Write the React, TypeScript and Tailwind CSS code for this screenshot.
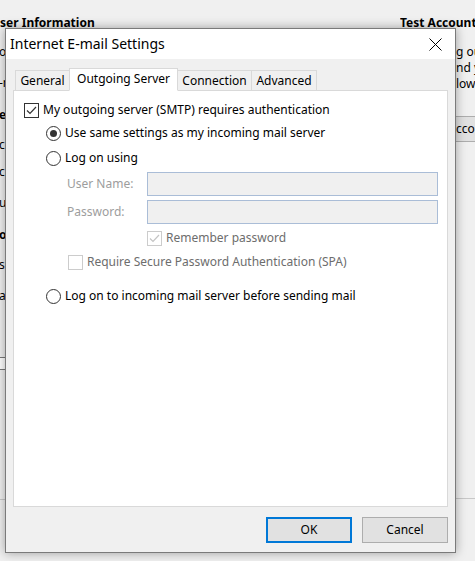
import React from 'react';

type BoxProps = { checked?: boolean; disabled?: boolean };

// Windows 10 style checkbox
const CheckBox: React.FC<BoxProps> = ({ checked, disabled }) => (
    <div
        className={`flex h-[15px] w-[15px] shrink-0 items-center justify-center border bg-white ${
            disabled ? 'border-[#cccccc]' : 'border-[#333333]'
        }`}
    >
        {checked && (
            <svg width="13" height="13" viewBox="0 0 13 13">
                <path
                    d="M2 6.5 L5 9.5 L11 3"
                    fill="none"
                    stroke={disabled ? '#c4c4c4' : '#333333'}
                    strokeWidth="1.2"
                />
            </svg>
        )}
    </div>
);

const Radio: React.FC<{ checked?: boolean }> = ({ checked }) => (
    <div className="flex h-[15px] w-[15px] shrink-0 items-center justify-center rounded-full border border-[#333333] bg-white">
        {checked && <div className="h-[7px] w-[7px] rounded-full bg-[#333333]" />}
    </div>
);

const Tab: React.FC<{ label: string; width: string; active?: boolean; first?: boolean }> = ({
    label,
    width,
    active,
    first,
}) => (
    <div
        className={`flex items-center justify-center border border-[#d9d9d9] ${width} ${first ? '' : 'ml-[-1px]'} ${
            active ? 'relative z-10 h-[23px] border-b-white bg-white pb-[2px]' : 'h-[21px] bg-[#f0f0f0]'
        }`}
    >
        {label}
    </div>
);

const Button: React.FC<{ label: string; primary?: boolean }> = ({ label, primary }) => (
    <div
        className={`flex h-[26px] w-[86px] items-center justify-center bg-[#e1e1e1] ${
            primary ? 'border-2 border-[#0078d7]' : 'border border-[#adadad]'
        }`}
    >
        {label}
    </div>
);

export default function App() {
    return (
        <div className="relative h-[561px] w-[475px] overflow-hidden bg-[#f0f0f0] font-['Noto_Sans',sans-serif] text-[12px] leading-[16px] text-black">
            {/* Ventana de fondo (Account Settings), casi todo tapado por el dialogo */}
            <div className="flex h-full">
                <div className="w-[400px] shrink-0 overflow-hidden whitespace-nowrap">
                    <div className="ml-[-9px] mt-[15px] h-[16px] font-bold">User Information</div>
                    <div className="ml-[-1px] mt-[13px] h-[16px]">o</div>
                    <div className="ml-[-1px] mt-[15px] h-[16px]">-m</div>
                    <div className="ml-[-1px] mt-[16px] h-[16px] font-bold">e</div>
                    <div className="ml-[-1px] mt-[14px] h-[16px]">c</div>
                    <div className="ml-[-1px] mt-[11px] h-[16px]">c</div>
                    <div className="ml-[-1px] mt-[15px] h-[16px]">u</div>
                    <div className="ml-[-1px] mt-[16px] h-[16px] font-bold">o</div>
                    <div className="ml-[-1px] mt-[14px] h-[16px]">s</div>
                    <div className="ml-[-1px] mt-[15px] h-[16px]">a:</div>
                    <div className="ml-[-10px] mt-[53px] h-[13px] w-[60px] border border-[#7a7a7a] bg-white" />
                    <div className="mt-[129px] border-t border-[#c8c8c8]" />
                </div>
                <div className="flex-1 overflow-hidden whitespace-nowrap">
                    <div className="mt-[15px] h-[16px] font-bold">Test Account</div>
                    <div className="ml-[56px] mt-[13px] h-[16px]">g ou</div>
                    <div className="ml-[56px] h-[16px]">nd y</div>
                    <div className="ml-[56px] h-[16px]">low</div>
                    <div className="ml-[12px] mt-[24px] flex h-[26px] w-[160px] items-center border border-[#adadad] bg-[#e1e1e1] pl-[43px]">
                        ccoun
                    </div>
                    <div className="mt-[356px] border-t border-[#c8c8c8]" />
                </div>
            </div>

            {/* Dialogo Internet E-mail Settings */}
            <div className="absolute left-[5px] top-[28px] flex h-[525px] w-[451px] flex-col border border-[#7a7a7a] bg-[#f0f0f0] shadow-[0_0_10px_rgba(0,0,0,0.35)]">
                <div className="flex h-[30px] shrink-0 items-center justify-between bg-white pl-[4px] pr-[13px]">
                    <span className="text-[14px] leading-[20px]">Internet E-mail Settings</span>
                    <svg width="13" height="13" viewBox="0 0 13 13">
                        <path d="M0.5 0.5 L12.5 12.5 M12.5 0.5 L0.5 12.5" stroke="#000000" strokeWidth="1" />
                    </svg>
                </div>

                <div className="flex flex-1 flex-col px-[7px] pt-[9px]">
                    <div className="relative z-10 mb-[-1px] flex h-[23px] items-end pl-[2px]">
                        <Tab label="General" width="w-[55px]" first />
                        <Tab label="Outgoing Server" width="w-[109px]" active />
                        <Tab label="Connection" width="w-[75px]" />
                        <Tab label="Advanced" width="w-[66px]" />
                    </div>

                    <div className="flex h-[417px] flex-col border border-[#d9d9d9] bg-white pt-[11px]">
                        <div className="flex h-[16px] items-center gap-[4px] pl-[10px]">
                            <CheckBox checked />
                            <span>My outgoing server (SMTP) requires authentication</span>
                        </div>
                        <div className="mt-[7px] flex h-[16px] items-center gap-[4px] pl-[32px]">
                            <Radio checked />
                            <span>Use same settings as my incoming mail server</span>
                        </div>
                        <div className="mt-[9px] flex h-[16px] items-center gap-[4px] pl-[32px]">
                            <Radio />
                            <span>Log on using</span>
                        </div>
                        <div className="mt-[6px] flex h-[24px] items-center pl-[53px]">
                            <span className="w-[80px] text-[#9d9d9d]">User Name:</span>
                            <div className="h-[24px] w-[291px] border border-[#aabdd7] bg-[#f0f0f0]" />
                        </div>
                        <div className="mt-[4px] flex h-[24px] items-center pl-[53px]">
                            <span className="w-[80px] text-[#9d9d9d]">Password:</span>
                            <div className="h-[24px] w-[291px] border border-[#aabdd7] bg-[#f0f0f0]" />
                        </div>
                        <div className="mt-[6px] flex h-[16px] items-center gap-[4px] pl-[133px]">
                            <CheckBox checked disabled />
                            <span className="text-[#6d6d6d]">Remember password</span>
                        </div>
                        <div className="mt-[8px] flex h-[16px] items-center gap-[4px] pl-[54px]">
                            <CheckBox disabled />
                            <span className="text-[#6d6d6d]">Require Secure Password Authentication (SPA)</span>
                        </div>
                        <div className="mt-[18px] flex h-[16px] items-center gap-[4px] pl-[32px]">
                            <Radio />
                            <span>Log on to incoming mail server before sending mail</span>
                        </div>
                    </div>

                    <div className="mt-[10px] flex justify-end gap-[10px]">
                        <Button label="OK" primary />
                        <Button label="Cancel" />
                    </div>
                </div>
            </div>
        </div>
    );
}
